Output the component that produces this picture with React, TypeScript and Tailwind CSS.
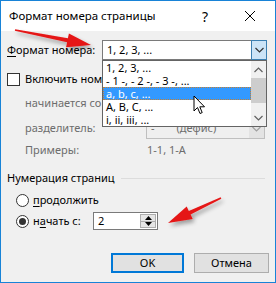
import React from 'react';

const Chevron = ({ up = false, color = '#333' }: { up?: boolean; color?: string }) => (
  <svg width="9" height="6" viewBox="0 0 9 6">
    <path d={up ? 'M0.5 5 L4.5 1 L8.5 5' : 'M0.5 1 L4.5 5 L8.5 1'} fill="none" stroke={color} strokeWidth="1.2" />
  </svg>
);

const formats = ['1, 2, 3, ...', '- 1 -, - 2 -, - 3 -, ...', 'a, b, c, ...', 'A, B, C, ...', 'i, ii, iii, ...'];

export default function App() {
  return (
    <div className="relative w-[276px] h-[283px] border border-[#1883d7] bg-[#f0f0f0] font-['Noto_Sans',sans-serif] text-[11px] text-black overflow-hidden select-none whitespace-nowrap">
      {/* title bar */}
      <div className="h-[30px] bg-white flex items-center pl-[8px] text-[11.5px]">
        <span className="flex-1">Формат номера страницы</span>
        <span className="w-[44px] text-center text-[14px]">?</span>
        <span className="w-[46px] mr-[2px] flex justify-center">
          <svg width="10" height="10" viewBox="0 0 10 10">
            <path d="M0 0 L10 10 M10 0 L0 10" stroke="#000" strokeWidth="1" />
          </svg>
        </span>
      </div>

      <div className="px-[6px]">
        {/* format row */}
        <div className="relative mt-[9px] h-[20px] flex items-center">
          <span className="w-[95px]">
            <span className="underline underline-offset-2">Ф</span>ормат номера:
          </span>
          <div className="w-[165px] h-full flex bg-white">
            <div className="flex-1 flex items-center pl-[4px] border border-r-0 border-[#7a7a7a]">1, 2, 3, ...</div>
            <div className="w-[16px] h-full flex items-center justify-center bg-[#cce4f7] border border-[#3c7fb1]">
              <Chevron />
            </div>
          </div>

          {/* open list */}
          <div className="absolute left-[95px] top-[20px] z-10 w-[165px] h-[67px] flex border border-[#646464] bg-white">
            <div className="flex-1 flex flex-col">
              {formats.map((f, i) => (
                <div
                  key={f}
                  className={
                    i === 2
                      ? 'h-[13px] leading-[11px] pl-[2px] bg-[#3399ff] text-white border border-dotted border-[#c77f2e]'
                      : 'h-[13px] leading-[13px] pl-[3px]'
                  }
                >
                  {f}
                </div>
              ))}
            </div>
            <div className="w-[15px] flex flex-col bg-[#f0f0f0]">
              <div className="h-[17px] flex items-center justify-center">
                <Chevron up color="#606060" />
              </div>
              <div className="h-[25px] bg-[#cdcdcd]" />
              <div className="h-[6px]" />
              <div className="h-[17px] flex items-center justify-center">
                <Chevron color="#606060" />
              </div>
            </div>
          </div>
        </div>

        {/* include chapter (partly hidden behind the open list) */}
        <div className="mt-[12px] h-[15px] flex items-center">
          <div className="w-[13px] h-[13px] border border-[#333] bg-white" />
          <span className="ml-[5px] w-[77px] overflow-hidden">Включить номер главы</span>
        </div>

        <div className="mt-[5px] h-[22px] flex items-center text-[#6d6d6d]">
          <span className="w-[95px] pl-[18px] overflow-hidden">начинается со стиля:</span>
        </div>

        <div className="mt-[4px] h-[21px] flex items-center text-[#6d6d6d]">
          <span className="w-[139px] pl-[18px]">разделитель:</span>
          <div className="w-[119px] h-full flex border border-[#bfbfbf] bg-[#efefef]">
            <span className="flex-1 flex items-center pl-[4px]">
              -<span className="ml-[22px]">(дефис)</span>
            </span>
            <span className="w-[15px] flex items-center justify-center bg-[#e3e3e3]">
              <Chevron color="#a0a0a0" />
            </span>
          </div>
        </div>

        <div className="mt-[1px] h-[21px] flex items-center text-[#6d6d6d]">
          <span className="w-[139px] pl-[18px]">Примеры:</span>
          <span className="pl-[1px]">1-1, 1-A</span>
        </div>

        {/* numbering group */}
        <div className="mt-[9px] h-[16px] flex items-center mr-[4px]">
          <span>Нумерация страниц</span>
          <div className="flex-1 h-px ml-[6px] bg-[#dcdcdc]" />
        </div>

        <div className="mt-[6px] h-[16px] flex items-center pl-[9px]">
          <div className="w-[13px] h-[13px] rounded-full border border-[#333] bg-white" />
          <span className="ml-[4px]">
            <span className="underline underline-offset-2">п</span>родолжить
          </span>
        </div>

        <div className="mt-[4px] h-[18px] flex items-center pl-[9px]">
          <div className="w-[13px] h-[13px] rounded-full border border-[#333] bg-white flex items-center justify-center">
            <div className="w-[7px] h-[7px] rounded-full bg-[#333]" />
          </div>
          <span className="ml-[4px] w-[60px]">
            н<span className="underline underline-offset-2">а</span>чать с:
          </span>
          <div className="w-[65px] h-full flex border border-[#7a7a7a] bg-white">
            <span className="flex-1 flex items-center pl-[4px]">2</span>
            <div className="w-[16px] my-[1px] mr-[1px] flex flex-col border border-[#adadad] bg-[#e5e5e5]">
              <div className="flex-1 flex items-center justify-center border-b border-[#adadad]">
                <svg width="7" height="4" viewBox="0 0 7 4"><path d="M0 4 L3.5 0 L7 4 Z" fill="#000" /></svg>
              </div>
              <div className="flex-1 flex items-center justify-center">
                <svg width="7" height="4" viewBox="0 0 7 4"><path d="M0 0 L3.5 4 L7 0 Z" fill="#000" /></svg>
              </div>
            </div>
          </div>
        </div>

        {/* buttons */}
        <div className="mt-[23px] h-[20px] flex pl-[104px] gap-[10px]">
          <button className="w-[73px] h-full bg-[#e1e1e1] border-2 border-[#0078d7] flex items-center justify-center">
            OK
          </button>
          <button className="w-[75px] h-full bg-[#e1e1e1] border border-[#adadad] flex items-center justify-center">
            Отмена
          </button>
        </div>
      </div>

      {/* mouse cursor */}
      <svg className="absolute left-[192px] top-[94px] z-20" width="13" height="21" viewBox="0 0 13 21">
        <path d="M1 1 L1 16 L4.5 12.5 L7 18.5 L9.2 17.6 L6.8 11.8 L11.5 11.8 Z" fill="#fff" stroke="#000" strokeWidth="1" strokeLinejoin="round" />
      </svg>

      {/* red arrows */}
      <svg className="absolute left-0 top-0 z-30 pointer-events-none" width="276" height="283" viewBox="0 0 276 283">
        <defs>
          <filter id="sh" x="-20%" y="-50%" width="140%" height="200%">
            <feGaussianBlur in="SourceAlpha" stdDeviation="2" />
            <feOffset dx="2" dy="3" result="b" />
            <feComponentTransfer><feFuncA type="linear" slope="0.35" /></feComponentTransfer>
            <feMerge>
              <feMergeNode />
              <feMergeNode in="SourceGraphic" />
            </feMerge>
          </filter>
        </defs>
        <g filter="url(#sh)" fill="#e51616">
          <polygon points="14.2,28.3 66.9,37.3 67.9,32.4 90,44 65.1,46.2 66.1,41.3 13.8,29.7" />
          <polygon points="220.3,197.7 189.6,213.6 191.7,218.1 167,222 185.7,205.4 187.8,209.9 219.7,196.3" />
        </g>
      </svg>
    </div>
  );
}
